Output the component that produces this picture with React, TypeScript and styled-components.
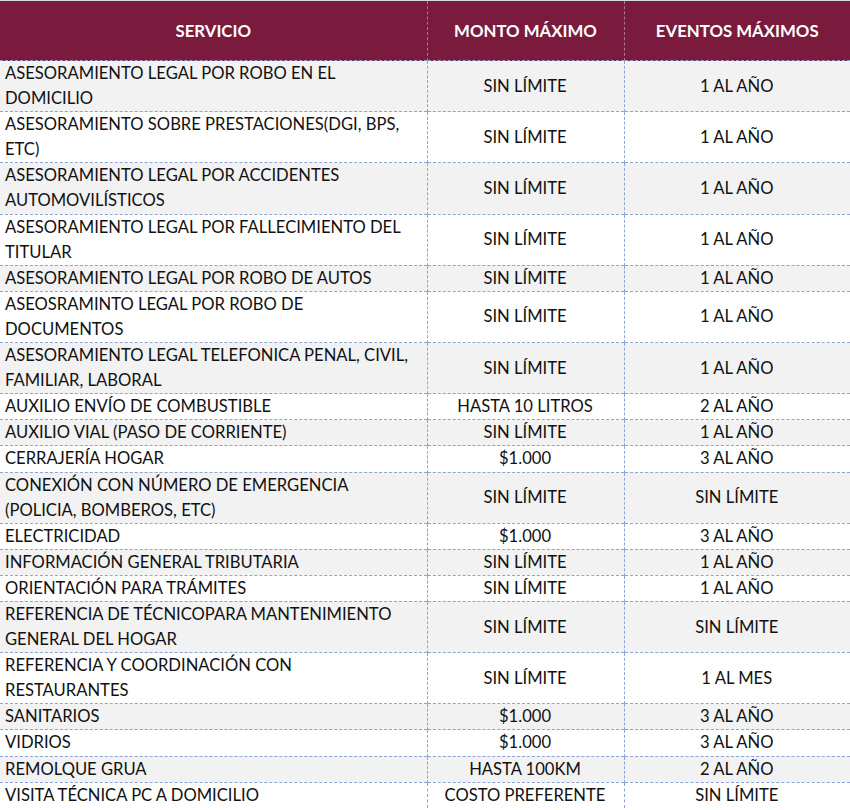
import React from "react";
import styled, { createGlobalStyle } from "styled-components";

const Global = createGlobalStyle`
  html, body { margin: 0; padding: 0; background: #ffffff; }
  body { font-family: Lato, "Open Sans", sans-serif; }
`;

const Table = styled.table`
  width: 850px;
  border-collapse: collapse;
  table-layout: fixed;
  font-family: Lato, "Open Sans", sans-serif;
  font-size: 16.6px;
  color: #111;
  border-top: 1px solid #d9d9d9;
`;

const HeadCell = styled.th`
  background: #7a1a3c;
  color: #ffffff;
  font-weight: 700;
  font-size: 16.8px;
  height: 59px;
  padding: 0;
  text-align: center;
  vertical-align: middle;
  border-left: 1px dashed #b07890;
  &:first-child { border-left: none; }
`;

const Row = styled.tr<{ $shade: boolean }>`
  background: ${(p) => (p.$shade ? "#f2f2f2" : "#ffffff")};
  border-top: 1px dashed #8ea3d6;
`;

const Cell = styled.td<{ $center?: boolean }>`
  padding: 0 6px 0 5px;
  line-height: 25.1px;
  text-align: ${(p) => (p.$center ? "center" : "left")};
  vertical-align: middle;
  border-left: 1px dashed #8ea3d6;
  &:first-child { border-left: none; }
`;

const rows: [string[], string, string][] = [
  [["ASESORAMIENTO LEGAL POR ROBO EN EL", "DOMICILIO"], "SIN LÍMITE", "1 AL AÑO"],
  [["ASESORAMIENTO SOBRE PRESTACIONES(DGI, BPS,", "ETC)"], "SIN LÍMITE", "1 AL AÑO"],
  [["ASESORAMIENTO LEGAL POR ACCIDENTES", "AUTOMOVILÍSTICOS"], "SIN LÍMITE", "1 AL AÑO"],
  [["ASESORAMIENTO LEGAL POR FALLECIMIENTO DEL", "TITULAR"], "SIN LÍMITE", "1 AL AÑO"],
  [["ASESORAMIENTO LEGAL POR ROBO DE AUTOS"], "SIN LÍMITE", "1 AL AÑO"],
  [["ASEOSRAMINTO LEGAL POR ROBO DE", "DOCUMENTOS"], "SIN LÍMITE", "1 AL AÑO"],
  [["ASESORAMIENTO LEGAL TELEFONICA PENAL, CIVIL,", "FAMILIAR, LABORAL"], "SIN LÍMITE", "1 AL AÑO"],
  [["AUXILIO ENVÍO DE COMBUSTIBLE"], "HASTA 10 LITROS", "2 AL AÑO"],
  [["AUXILIO VIAL (PASO DE CORRIENTE)"], "SIN LÍMITE", "1 AL AÑO"],
  [["CERRAJERÍA HOGAR"], "$1.000", "3 AL AÑO"],
  [["CONEXIÓN CON NÚMERO DE EMERGENCIA", "(POLICIA, BOMBEROS, ETC)"], "SIN LÍMITE", "SIN LÍMITE"],
  [["ELECTRICIDAD"], "$1.000", "3 AL AÑO"],
  [["INFORMACIÓN GENERAL TRIBUTARIA"], "SIN LÍMITE", "1 AL AÑO"],
  [["ORIENTACIÓN PARA TRÁMITES"], "SIN LÍMITE", "1 AL AÑO"],
  [["REFERENCIA DE TÉCNICOPARA MANTENIMIENTO", "GENERAL DEL HOGAR"], "SIN LÍMITE", "SIN LÍMITE"],
  [["REFERENCIA Y COORDINACIÓN CON", "RESTAURANTES"], "SIN LÍMITE", "1 AL MES"],
  [["SANITARIOS"], "$1.000", "3 AL AÑO"],
  [["VIDRIOS"], "$1.000", "3 AL AÑO"],
  [["REMOLQUE GRUA"], "HASTA 100KM", "2 AL AÑO"],
  [["VISITA TÉCNICA PC A DOMICILIO"], "COSTO PREFERENTE", "SIN LÍMITE"],
];

export default function App() {
  return (
    <>
      <Global />
      <Table>
        <colgroup>
          <col style={{ width: "427px" }} />
          <col style={{ width: "197px" }} />
          <col style={{ width: "226px" }} />
        </colgroup>
        <thead>
          <tr>
            <HeadCell>SERVICIO</HeadCell>
            <HeadCell>MONTO MÁXIMO</HeadCell>
            <HeadCell>EVENTOS MÁXIMOS</HeadCell>
          </tr>
        </thead>
        <tbody>
          {rows.map(([svc, monto, eventos], i) => (
            <Row key={i} $shade={i % 2 === 0}>
              <Cell>
                {svc.map((l, j) => (
                  <React.Fragment key={j}>
                    {j > 0 && <br />}
                    {l}
                  </React.Fragment>
                ))}
              </Cell>
              <Cell $center>{monto}</Cell>
              <Cell $center>{eventos}</Cell>
            </Row>
          ))}
        </tbody>
      </Table>
    </>
  );
}
